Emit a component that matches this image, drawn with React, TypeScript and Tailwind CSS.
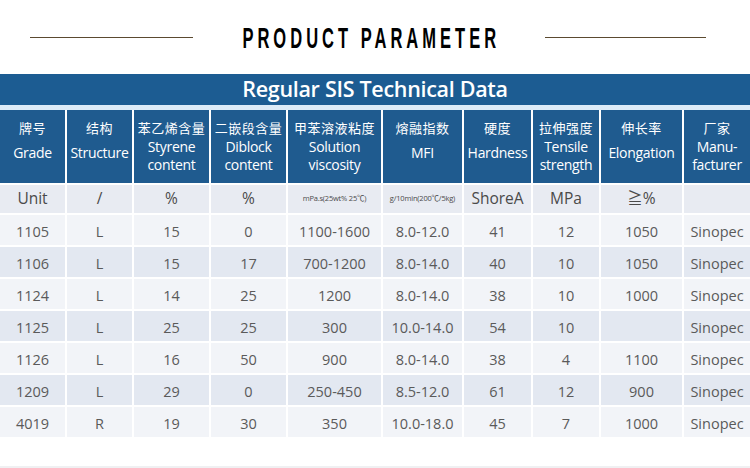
import React from "react";

const cols = "grid-cols-[65px_65px_75px_75px_93px_79px_67px_66px_81px_1fr]";

const headers: [string, string[]][] = [
  ["牌号", ["Grade"]],
  ["结构", ["Structure"]],
  ["苯乙烯含量", ["Styrene", "content"]],
  ["二嵌段含量", ["Diblock", "content"]],
  ["甲苯溶液粘度", ["Solution", "viscosity"]],
  ["熔融指数", ["MFI"]],
  ["硬度", ["Hardness"]],
  ["拉伸强度", ["Tensile", "strength"]],
  ["伸长率", ["Elongation"]],
  ["厂家", ["Manu-", "facturer"]],
];

const rows: string[][] = [
  ["1105", "L", "15", "0", "1100-1600", "8.0-12.0", "41", "12", "1050", "Sinopec"],
  ["1106", "L", "15", "17", "700-1200", "8.0-14.0", "40", "10", "1050", "Sinopec"],
  ["1124", "L", "14", "25", "1200", "8.0-14.0", "38", "10", "1000", "Sinopec"],
  ["1125", "L", "25", "25", "300", "10.0-14.0", "54", "10", "", "Sinopec"],
  ["1126", "L", "16", "50", "900", "8.0-14.0", "38", "4", "1100", "Sinopec"],
  ["1209", "L", "29", "0", "250-450", "8.5-12.0", "61", "12", "900", "Sinopec"],
  ["4019", "R", "19", "30", "350", "10.0-18.0", "45", "7", "1000", "Sinopec"],
];

const font = { fontFamily: '"Open Sans", "Noto Sans CJK SC", sans-serif' };

export default function App() {
  return (
    <div
      className="w-[750px] h-[468px] bg-white flex flex-col overflow-hidden"
      style={font}
    >
      <div className="h-[74px] flex items-center">
        <div className="ml-[30px] w-[163px] h-px bg-[#5b4a30]" />
        <div className="ml-[52px] w-[252px] flex justify-center pt-[2px]">
          <span
            className="inline-block whitespace-nowrap text-[30px] font-bold leading-none tracking-[7.3px] text-black scale-x-[0.55] origin-center"
            style={{ fontFamily: '"Liberation Sans", Arial, sans-serif' }}
          >
            PRODUCT PARAMETER
          </span>
        </div>
        <div className="ml-[48px] w-[161px] h-px bg-[#5b4a30]" />
      </div>
      <div className="h-[31px] bg-[#1c5c92] flex items-center justify-center text-white text-[21.5px] font-semibold tracking-[-0.3px]">
        Regular SIS Technical Data
      </div>
      <div className="h-[5px] bg-[#dcebf7]" />
      <div className={`grid ${cols} gap-[2px] bg-white`}>
        {headers.map(([zh, en], i) => (
          <div
            key={i}
            className="h-[73px] bg-[#1f5b8f] text-white flex flex-col items-center text-center pt-[8px]"
          >
            <div className="text-[13px] tracking-[0.5px] leading-[20px]">{zh}</div>
            {en.map((e, j) => (
              <div
                key={j}
                className={`text-[14px] tracking-[-0.3px] leading-[18px] ${
                  en.length === 1 ? "mt-[6px]" : ""
                }`}
              >
                {e}
              </div>
            ))}
          </div>
        ))}
        {[
          ["Unit", "text-[15.5px]"],
          ["/", "text-[15.5px]"],
          ["%", "text-[15.5px]"],
          ["%", "text-[15.5px]"],
          ["mPa.s(25wt% 25℃)", "text-[7.5px] tracking-[-0.2px]"],
          ["g/10min(200℃/5kg)", "text-[7.5px] tracking-[-0.2px]"],
          ["ShoreA", "text-[15.5px]"],
          ["MPa", "text-[15.5px]"],
          ["≧%", "text-[15.5px]"],
          ["", "text-[15.5px]"],
        ].map(([t, c], i) => (
          <div
            key={i}
            className={`h-[28px] bg-[#e8ebf2] text-[#4a4a4a] flex items-center justify-center whitespace-nowrap ${c}`}
          >
            {t}
          </div>
        ))}
        {rows.map((r, ri) =>
          r.map((t, ci) => (
            <div
              key={`${ri}-${ci}`}
              className={`h-[30px] pt-[3px] flex items-center justify-center text-[14.5px] text-[#5a5a5a] ${
                ri % 2 === 0 ? "bg-[#f2f4f8]" : "bg-[#e3e8f1]"
              }`}
            >
              {t}
            </div>
          ))
        )}
      </div>
      <div className="mt-auto h-[2px] bg-[#f0f0f2]" />
    </div>
  );
}
